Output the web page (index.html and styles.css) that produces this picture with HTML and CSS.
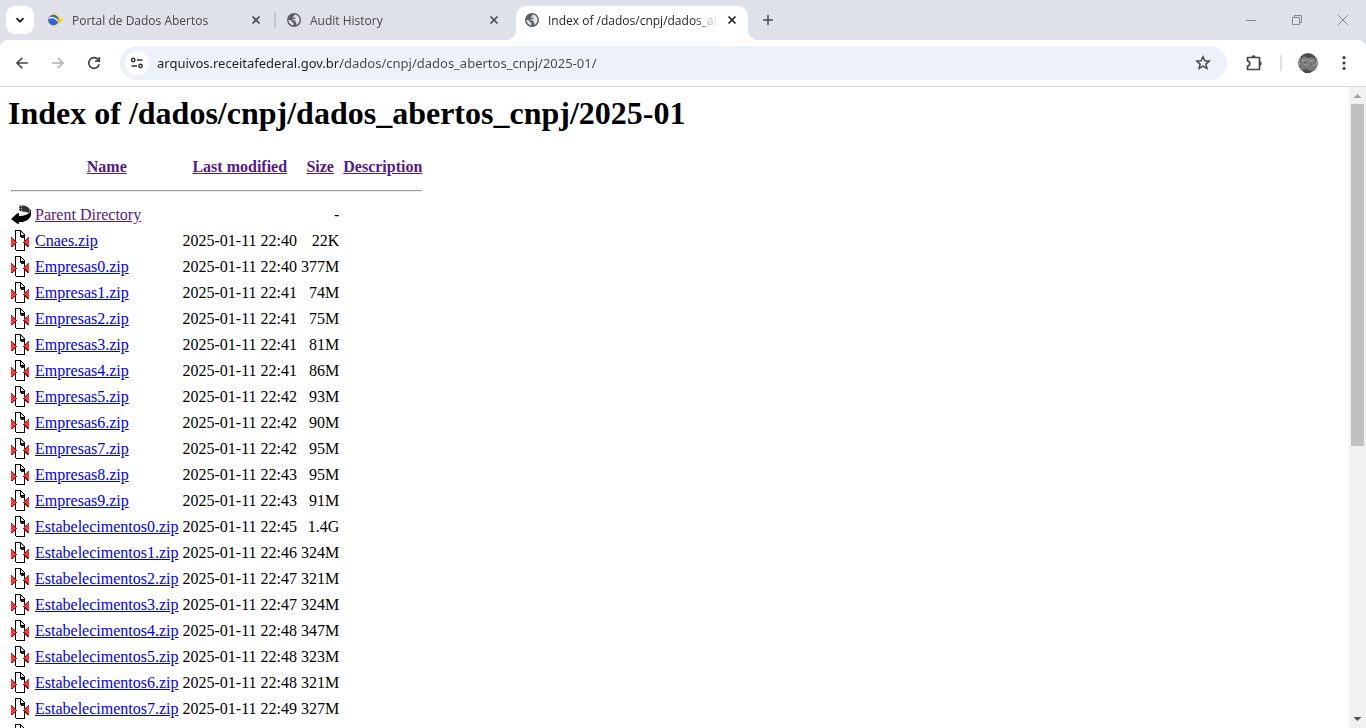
FILE: index.html
```html
<!DOCTYPE html>
<html lang="en">
<head>
<meta charset="utf-8">
<title>Index of /dados/cnpj/dados_abertos_cnpj/2025-01</title>
<link rel="stylesheet" href="styles.css">
</head>
<body>
<svg class="defs" aria-hidden="true">
  <symbol id="globe" viewBox="0 0 14 14"><circle cx="7" cy="7" r="7" fill="#5b5f65"/><path d="M1.4 6.8 4.2 7.6 4.9 9.2 6.4 9.6 6.3 12.4C3.5 12.1 1.5 9.8 1.4 6.8ZM5 4.1 7.1 3.6 7.5 1.5C10.4 1.7 12.5 4 12.5 6.7 12.5 9 11.2 11 9.3 11.9L9.4 9.8 8.3 8.8 8.4 7.5 6 7.2 5.2 6.2 8.3 6.1 8.8 4.8 6.6 4.7Z" fill="#e4e6eb"/></symbol>
  <symbol id="cross" viewBox="0 0 10 10"><path d="m1.5 1.5 7 7m0-7-7 7" fill="none" stroke="currentColor" stroke-width="1.6"/></symbol>
  <symbol id="zip" viewBox="0 0 20 22"><g shape-rendering="crispEdges"><path d="M4 0h6v1h1v1h1v1h1v1h1v17H5v-1H4z" fill="#000"/><path d="M5 1h4v6h4v13H5z" fill="#fff"/><path d="M10 2h1v1h1v1h1v1h-3z" fill="#ddd"/><path d="M9 6h4v2h-3V7H9z" fill="#222"/><path d="M0 7h1v1h1v1h1v1h1v1h1v1h1v1H5v1H4v1H3v1H2v1H0zM18 7v10h-2v-1h-1v-1h-1v-1h-1v-1h-1v-1h1v-1h1v-1h1V9h1V8h1V7z" fill="#811"/><path d="M0 8h1v1h1v1h1v1h1v1h1v1H4v1H3v1H2v1H0zM18 8v8h-1v-1h-1v-1h-1v-1h-1v-1h-1v-1h2v-1h1V9h1V8z" fill="#f33"/></g></symbol>
</svg>
<div class="browser">
  <header>
    <div class="tabstrip">
      <button class="tab-search" aria-label="Search tabs"><svg width="12" height="12" viewBox="0 0 12 12"><path d="m2.5 4.2 3.5 3.5 3.5-3.5" fill="none" stroke="#1f1f1f" stroke-width="1.8"/></svg></button>
      <div class="tab">
        <svg class="fav" viewBox="0 0 16 16"><path d="M5 0 16 8 5 15Z" fill="#fbd927"/><circle cx="5.4" cy="8" r="5.3" fill="#3565cc"/><path d="M1 6.3C4 4.6 8 6 10.2 9.4" fill="none" stroke="#fff" stroke-width="1.4"/></svg>
        <span class="tab-title">Portal de Dados Abertos</span>
        <button class="close" aria-label="Close tab"><svg width="10" height="10"><use href="#cross"/></svg></button>
      </div>
      <div class="tab ruled">
        <svg class="fav round"><use href="#globe"/></svg>
        <span class="tab-title">Audit History</span>
        <button class="close" aria-label="Close tab"><svg width="10" height="10"><use href="#cross"/></svg></button>
      </div>
      <div class="tab active">
        <svg class="fav round"><use href="#globe"/></svg>
        <span class="tab-title">Index of /dados/cnpj/dados_abertos_cnpj/2025-01</span>
        <button class="close" aria-label="Close tab"><svg width="10" height="10"><use href="#cross"/></svg></button>
      </div>
      <button class="new-tab" aria-label="New tab"><svg width="12" height="12" viewBox="0 0 12 12"><path d="M6 1v10M1 6h10" stroke="#474747" stroke-width="1.5"/></svg></button>
      <div class="window-controls">
        <button aria-label="Minimize"><svg width="12" height="12" viewBox="0 0 12 12"><path d="M1 6.5h10" stroke="#858789"/></svg></button>
        <button aria-label="Restore"><svg width="12" height="12" viewBox="0 0 12 12"><path d="M1.5 3.5h7v7h-7zM3.5 3V1.5h7v7H9" fill="none" stroke="#858789"/></svg></button>
        <button aria-label="Close"><svg width="12" height="12" viewBox="0 0 12 12"><path d="m1 1 10 10m0-10L1 11" stroke="#858789"/></svg></button>
      </div>
    </div>
    <div class="toolbar">
      <div class="nav">
        <button aria-label="Back"><svg width="16" height="16" viewBox="0 0 16 16"><path d="M14 8H3m5.3-5.3L3 8l5.3 5.3" fill="none" stroke="#474747" stroke-width="1.6"/></svg></button>
        <button aria-label="Forward"><svg width="16" height="16" viewBox="0 0 16 16"><path d="M2 8h11M7.7 2.7 13 8l-5.3 5.3" fill="none" stroke="#b0b2b5" stroke-width="1.6"/></svg></button>
        <button aria-label="Reload"><svg width="16" height="16" viewBox="0 0 16 16"><path d="M13.2 9.2a5.3 5.3 0 1 1-1-4.5L13.300 6M13.300 2v4.200H9.200" fill="none" stroke="#474747" stroke-width="1.7"/></svg></button>
      </div>
      <div class="omnibox">
        <button class="site-info" aria-label="View site information"><svg width="14" height="14" viewBox="0 0 14 14"><g fill="none" stroke="#303030" stroke-width="1.5"><circle cx="3.2" cy="4" r="1.7"/><path d="M7 4h5.500M1.500 10H7"/><circle cx="10.5" cy="10" r="1.7"/></g></svg></button>
        <input class="url" type="text" aria-label="Address" value="arquivos.receitafederal.gov.br/dados/cnpj/dados_abertos_cnpj/2025-01/">
        <button aria-label="Bookmark"><svg width="16" height="16" viewBox="0 0 16 16"><path d="m8 1.800 1.800 4 4.400.4-3.300 2.900 1 4.300L8 11.100l-3.900 2.300 1-4.300-3.300-2.900 4.400-.4z" fill="none" stroke="#474747" stroke-width="1.5"/></svg></button>
      </div>
      <div class="actions">
        <button aria-label="Extensions"><svg width="18" height="18" viewBox="0 0 18 18"><path d="M2.500 3.500h12v12h-12v-3.300c3-.2 3-5 0-5.200z" fill="none" stroke="#474747" stroke-width="1.7" stroke-linejoin="round"/><path d="M6.300 3.500a2.200 2.200 0 0 1 4.400 0zM14.500 7.300a2.200 2.200 0 0 1 0 4.400z" fill="#474747"/></svg></button>
        <span class="divider"></span>
        <button aria-label="Profile"><svg width="20" height="20" viewBox="0 0 20 20"><circle cx="10" cy="10" r="10" fill="#7c7c7c"/><path d="M3 3.500Q10-2 16 3l2 4-4-3-4 1-4-2-3 3zM4 17l5-1 3 2 4-2-4 4H7z" fill="#484848"/><path d="M1 11q3-3 5 0t5-1 4 1 4-2M4 7l3 1 2-2 3 2 4-1" fill="none" stroke="#b0b0b0" stroke-dasharray="2 1"/><path d="M2 14q3-2 5 0t5-1 5 1M2 9l4 1 3-1 4 2 5-3" fill="none" stroke="#5c5c5c" stroke-dasharray="2 2"/></svg></button>
        <button aria-label="Menu"><svg width="16" height="16" viewBox="0 0 16 16" fill="#3c3c3c"><circle cx="8" cy="2.500" r="1.600"/><circle cx="8" cy="8" r="1.600"/><circle cx="8" cy="13.500" r="1.600"/></svg></button>
      </div>
    </div>
  </header>
  <div class="viewport">
    <main>
      <h1>Index of /dados/cnpj/dados_abertos_cnpj/2025-01</h1>
      <table>
        <thead>
        <tr><th class="icon"></th><th><a class="visited" href="#name">Name</a></th><th><a class="visited" href="#modified">Last modified</a></th><th><a class="visited" href="#size">Size</a></th><th><a class="visited" href="#description">Description</a></th></tr>
        <tr><th colspan="5"><hr></th></tr>
        </thead>
        <tbody>
        <tr><td class="icon"><svg viewBox="0 0 20 22"><path d="M8 1.500h5q5 1 6 4.500l-1 3-3-1-7-1z" fill="#333"/><path d="M8.500 2v6M10.500 2v5" stroke="#bbb" stroke-dasharray="1 1"/><path d="M19 5q1 1 1 3v3q-1 5-8 7H8v2L6 19.500 0 15l6-5.500L8 9v3q8 0 11-4z" fill="#000"/></svg></td><td><a class="visited" href="#parent">Parent Directory</a></td><td></td><td class="num">-</td><td></td></tr>
        <tr><td class="icon"><svg><use href="#zip"/></svg></td><td><a href="#f">Cnaes.zip</a></td><td class="num">2025-01-11 22:40</td><td class="num">22K</td><td></td></tr>
        <tr><td class="icon"><svg><use href="#zip"/></svg></td><td><a href="#f">Empresas0.zip</a></td><td class="num">2025-01-11 22:40</td><td class="num">377M</td><td></td></tr>
        <tr><td class="icon"><svg><use href="#zip"/></svg></td><td><a href="#f">Empresas1.zip</a></td><td class="num">2025-01-11 22:41</td><td class="num">74M</td><td></td></tr>
        <tr><td class="icon"><svg><use href="#zip"/></svg></td><td><a href="#f">Empresas2.zip</a></td><td class="num">2025-01-11 22:41</td><td class="num">75M</td><td></td></tr>
        <tr><td class="icon"><svg><use href="#zip"/></svg></td><td><a href="#f">Empresas3.zip</a></td><td class="num">2025-01-11 22:41</td><td class="num">81M</td><td></td></tr>
        <tr><td class="icon"><svg><use href="#zip"/></svg></td><td><a href="#f">Empresas4.zip</a></td><td class="num">2025-01-11 22:41</td><td class="num">86M</td><td></td></tr>
        <tr><td class="icon"><svg><use href="#zip"/></svg></td><td><a href="#f">Empresas5.zip</a></td><td class="num">2025-01-11 22:42</td><td class="num">93M</td><td></td></tr>
        <tr><td class="icon"><svg><use href="#zip"/></svg></td><td><a href="#f">Empresas6.zip</a></td><td class="num">2025-01-11 22:42</td><td class="num">90M</td><td></td></tr>
        <tr><td class="icon"><svg><use href="#zip"/></svg></td><td><a href="#f">Empresas7.zip</a></td><td class="num">2025-01-11 22:42</td><td class="num">95M</td><td></td></tr>
        <tr><td class="icon"><svg><use href="#zip"/></svg></td><td><a href="#f">Empresas8.zip</a></td><td class="num">2025-01-11 22:43</td><td class="num">95M</td><td></td></tr>
        <tr><td class="icon"><svg><use href="#zip"/></svg></td><td><a href="#f">Empresas9.zip</a></td><td class="num">2025-01-11 22:43</td><td class="num">91M</td><td></td></tr>
        <tr><td class="icon"><svg><use href="#zip"/></svg></td><td><a href="#f">Estabelecimentos0.zip</a></td><td class="num">2025-01-11 22:45</td><td class="num">1.4G</td><td></td></tr>
        <tr><td class="icon"><svg><use href="#zip"/></svg></td><td><a href="#f">Estabelecimentos1.zip</a></td><td class="num">2025-01-11 22:46</td><td class="num">324M</td><td></td></tr>
        <tr><td class="icon"><svg><use href="#zip"/></svg></td><td><a href="#f">Estabelecimentos2.zip</a></td><td class="num">2025-01-11 22:47</td><td class="num">321M</td><td></td></tr>
        <tr><td class="icon"><svg><use href="#zip"/></svg></td><td><a href="#f">Estabelecimentos3.zip</a></td><td class="num">2025-01-11 22:47</td><td class="num">324M</td><td></td></tr>
        <tr><td class="icon"><svg><use href="#zip"/></svg></td><td><a href="#f">Estabelecimentos4.zip</a></td><td class="num">2025-01-11 22:48</td><td class="num">347M</td><td></td></tr>
        <tr><td class="icon"><svg><use href="#zip"/></svg></td><td><a href="#f">Estabelecimentos5.zip</a></td><td class="num">2025-01-11 22:48</td><td class="num">323M</td><td></td></tr>
        <tr><td class="icon"><svg><use href="#zip"/></svg></td><td><a href="#f">Estabelecimentos6.zip</a></td><td class="num">2025-01-11 22:48</td><td class="num">321M</td><td></td></tr>
        <tr><td class="icon"><svg><use href="#zip"/></svg></td><td><a href="#f">Estabelecimentos7.zip</a></td><td class="num">2025-01-11 22:49</td><td class="num">327M</td><td></td></tr>
        <tr><td class="icon"><svg><use href="#zip"/></svg></td><td></td><td></td><td></td><td></td></tr>
        </tbody>
      </table>
    </main>
    <div class="scrollbar" aria-hidden="true">
      <svg viewBox="0 0 17 17"><path d="M4.500 11h8l-4-4z" fill="#a0a0a0"/></svg>
      <div class="track"><div class="thumb"></div></div>
      <svg viewBox="0 0 17 17"><path d="M4.500 6h8l-4 4z" fill="#505050"/></svg>
    </div>
  </div>
</div>
</body>
</html>
```
FILE: styles.css
```css
* { box-sizing: border-box; }
body { margin: 0; background: #fff; color: #000; font-family: "Liberation Serif", "Times New Roman", serif; font-size: 16px; }
button { display: flex; align-items: center; justify-content: center; margin: 0; padding: 0; border: 0; background: none; flex: none; }
svg { display: block; flex: none; }
.defs { position: absolute; width: 0; height: 0; }
.browser { display: flex; flex-direction: column; height: 100vh; overflow: hidden; }
header { flex: none; background: #dee1e8; font-family: "Open Sans", "Noto Sans", sans-serif; }

.tabstrip { display: flex; align-items: stretch; height: 40px; padding: 6px 0 0 6px; }
.tab-search { width: 28px; height: 28px; margin-right: 4px; border-radius: 9px; background: #fff; }
.tab { position: relative; display: flex; align-items: center; flex: 0 1 238px; min-width: 0; padding: 0 12px 6px 10px; color: #474747; font-size: 12px; }
.tab.ruled::before { content: ""; position: absolute; left: -2px; top: 6px; width: 2px; height: 16px; background: #c4c6cb; }
.fav { width: 16px; height: 16px; margin-right: 8px; }
.fav.round { width: 14px; height: 14px; margin: 0 9px 0 1px; }
.tab-title { flex: 1; overflow: hidden; white-space: nowrap; margin-right: 6px; mask-image: linear-gradient(90deg, #000 calc(100% - 24px), transparent); }
.close { width: 16px; height: 16px; color: #474747; }
.tab.active { flex-basis: 232px; margin-left: 2px; padding: 0 8px 6px; border-radius: 10px 10px 0 0; background: #fff; color: #1f1f1f; }
.tab.active::before, .tab.active::after { content: ""; position: absolute; bottom: 0; width: 10px; height: 10px; }
.tab.active::before { left: -10px; background: radial-gradient(circle at 0 0, transparent 10px, #fff 10px); }
.tab.active::after { right: -10px; background: radial-gradient(circle at 100% 0, transparent 10px, #fff 10px); }
.tab.active .close { color: #1f1f1f; }
.new-tab { width: 28px; height: 28px; margin-left: 6px; }
.window-controls { display: flex; margin-left: auto; height: 28px; }
.window-controls button { width: 46px; }

.toolbar { display: flex; align-items: center; height: 47px; padding: 0 8px; border-bottom: 1px solid #dcdee2; border-radius: 8px 8px 0 0; background: #fff; }
.nav { display: flex; gap: 8px; margin-right: 12px; }
.nav button { width: 28px; height: 28px; }
.omnibox { display: flex; align-items: center; flex: 1; min-width: 0; height: 34px; padding: 0 16px 0 5px; border-radius: 17px; background: #ecf1fa; }
.site-info { width: 24px; height: 24px; border-radius: 12px; background: #fff; }
.url { flex: 1; min-width: 0; margin: 0 8px; padding: 0; border: 0; outline: 0; font-family: "Noto Sans", "Open Sans", sans-serif; font-size: 13px; color: #1f1f1f; background: linear-gradient(90deg, #1f1f1f 184px, #474747 184px); -webkit-background-clip: text; background-clip: text; -webkit-text-fill-color: transparent; }
.actions { display: flex; align-items: center; margin-left: 18px; }
.divider { width: 2px; height: 16px; margin: 0 16px 0 17px; background: #d3e3fd; }
.actions button + button { margin-left: 18px; margin-right: 6px; }

.viewport { display: flex; flex: 1; min-height: 0; }
main { flex: 1; min-width: 0; overflow: hidden; padding: 8px; }
h1 { margin: 0 0 21px; font-size: 32px; line-height: 37px; }
table { border-spacing: 2px; }
th, td { padding: 1px; white-space: nowrap; line-height: 18px; }
.icon { width: 22px; height: 24px; }
.icon svg { width: 20px; height: 22px; }
.num { text-align: right; }
hr { margin: 8px 0; }
a { color: #00e; }
a.visited { color: #551a8b; }
.scrollbar { display: flex; flex-direction: column; width: 17px; background: #f1f1f1; }
.scrollbar svg { width: 17px; height: 17px; }
.track { flex: 1; }
.thumb { height: 56.4%; margin: 0 2px; background: #c1c1c1; }
```
